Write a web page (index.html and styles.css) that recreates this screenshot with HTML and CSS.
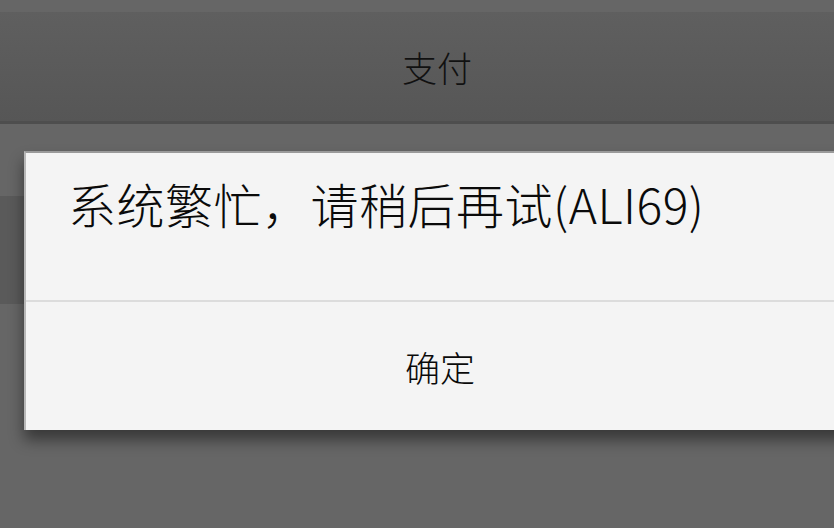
FILE: index.html
```html
<!DOCTYPE html>
<html lang="zh-CN">
<head>
  <meta charset="UTF-8">
  <title>支付</title>
  <link rel="stylesheet" href="styles.css">
</head>
<body>
  <div class="screen">
    <div class="topbar">
      <h1>支付</h1>
    </div>
    <div class="page">
      <div class="row"></div>
    </div>

    <div class="dialog">
      <div class="message">系统繁忙<span class="punct">，</span>请稍后再试(ALI69)</div>
      <div class="actions">
        <button>确定</button>
      </div>
    </div>
  </div>
</body>
</html>
```

FILE: styles.css
```css
html, body {
  margin: 0;
  padding: 0;
}
body {
  background: #666666;
  font-family: "Noto Sans CJK SC", "Noto Sans", sans-serif;
  overflow: hidden;
}
.screen {
  position: relative;
  width: 834px;
  height: 528px;
  overflow: hidden;
}
.topbar {
  margin-top: 12px;
  height: 109px;
  background: linear-gradient(#5f5f5f, #565656);
  border-bottom: 3px solid #4e4e4e;
  display: flex;
  align-items: center;
  justify-content: center;
  padding-left: 40px;
}
.topbar h1 {
  margin: 0;
  font-size: 35px;
  font-weight: 300;
  color: #111111;
}
.page {
  padding-top: 72px;
}
.row {
  height: 108px;
  background: #5a5a5a;
}
.dialog {
  position: absolute;
  left: 24px;
  top: 151px;
  width: 828px;
  background: #f4f4f4;
  border-top: 2px solid #9a9a9a;
  border-left: 2px solid #b8b8b8;
  box-shadow: 0 10px 14px rgba(0, 0, 0, 0.45);
}
.message {
  height: 149px;
  box-sizing: border-box;
  padding: 18px 0 0 42px;
  font-size: 48px;
  font-weight: 300;
  letter-spacing: 0.5px;
  line-height: 64px;
  color: #0a0a0a;
  border-bottom: 2px solid #dcdcdc;
}
.punct {
  font-family: "Noto Sans CJK TC", sans-serif;
}
.actions {
  height: 128px;
  display: flex;
}
.actions button {
  flex: 1;
  background: none;
  border: none;
  font-family: inherit;
  font-size: 35px;
  font-weight: 300;
  color: #0a0a0a;
  padding: 0;
  cursor: pointer;
}
```
